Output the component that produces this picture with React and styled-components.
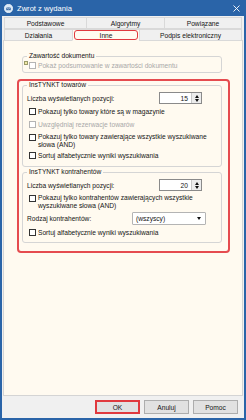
import React from 'react';
import styled, { createGlobalStyle } from 'styled-components';

const GlobalStyle = createGlobalStyle`
  html, body {
    margin: 0;
    padding: 0;
    background: #ffffff;
  }
  * {
    box-sizing: border-box;
  }
`;

const Window = styled.div`
  width: 246px;
  height: 420px;
  display: flex;
  flex-direction: column;
  background: #2a64a8;
  padding: 0 2px 2px;
  font-family: "Liberation Sans", Arial, sans-serif;
  font-size: 6.65px;
  color: #141414;
`;

const TitleBar = styled.div`
  height: 16px;
  display: flex;
  align-items: center;
  gap: 4px;
  padding: 0 4px 0 2px;
  color: #ffffff;
  font-size: 7.6px;
`;

const TitleText = styled.span`
  flex: 1;
`;

const Client = styled.div`
  flex: 1;
  display: flex;
  flex-direction: column;
  background: #f0f0f0;
  padding: 1px 1px 0;
`;

const Tabs = styled.div`
  display: flex;
  flex-direction: column;
  padding: 0 1px;
  position: relative;
  z-index: 1;
  margin-bottom: -1px;
`;

const TabRow = styled.div`
  display: flex;
  height: 12px;
`;

const Tab = styled.div`
  position: relative;
  width: ${(p) => p.w}px;
  margin-left: -1px;
  display: flex;
  align-items: center;
  justify-content: center;
  border: 1px solid #d9d9d9;
  border-bottom-color: ${(p) => (p.active ? '#fffaf0' : '#d9d9d9')};
  background: ${(p) => (p.active ? '#fffaf0' : '#f0f0f0')};
  &:first-child {
    margin-left: 0;
  }
  &::after {
    content: '';
    display: ${(p) => (p.marked ? 'block' : 'none')};
    position: absolute;
    inset: 0 1px 0 1px;
    border: 1.5px solid #e0393e;
    border-radius: 3px;
  }
`;

const Panel = styled.div`
  flex: 1;
  background: #fffaf0;
  border: 1px solid #d4d4d4;
  padding: 11px 0 0 18px;
  display: flex;
  flex-direction: column;
  align-items: flex-start;
`;

const Group = styled.fieldset`
  width: 200px;
  margin: ${(p) => p.mt || 0}px 0 0;
  padding: 0 0 ${(p) => p.pb || 0}px 4px;
  border: 1px solid #d5d5d5;
  border-radius: 3px;
  display: flex;
  flex-direction: column;
  min-width: 0;
`;

const Legend = styled.legend`
  padding: 0 2px;
  margin-left: 0;
  line-height: 8px;
  color: #141414;
`;

const Highlight = styled.div`
  margin: 6px 0 0 -5px;
  border: 2px solid #e54b4f;
  border-radius: 4px;
  padding: 0 6px 8px 3px;
`;

const Row = styled.div`
  display: flex;
  align-items: center;
  height: ${(p) => p.h || 13}px;
  margin-top: ${(p) => p.mt || 0}px;
`;

const CheckRow = styled.label`
  display: flex;
  align-items: ${(p) => (p.multi ? 'flex-start' : 'center')};
  height: ${(p) => p.h || 13}px;
  padding: ${(p) => (p.multi ? '2px' : '0')} 0 0 2px;
  color: ${(p) => (p.disabled ? '#a8a8a8' : '#141414')};
`;

const Marker = styled.span`
  width: 4px;
  height: 4px;
  margin: 0 1px 0 -5px;
  align-self: flex-start;
  margin-top: 1px;
  background: #f1e9a6;
  border: 1px solid #9a9a6a;
  flex-shrink: 0;
`;

const Box = styled.span`
  width: 7px;
  height: 7px;
  flex-shrink: 0;
  margin: ${(p) => (p.multi ? '0.5px' : '0')} 2px 0 0;
  border: 1px solid ${(p) => (p.disabled ? '#b4b4b4' : '#333333')};
  background: #ffffff;
`;

const CheckText = styled.span`
  line-height: 8px;
  width: 172px;
`;

const Spin = styled.div`
  display: flex;
  height: 12px;
  margin: 0 19px 0 auto;
  border: 1px solid #8a8a8a;
  background: #ffffff;
`;

const SpinValue = styled.span`
  width: 31px;
  display: flex;
  align-items: center;
  justify-content: flex-end;
  padding-right: 3px;
`;

const SpinButtons = styled.span`
  width: 10px;
  display: flex;
  flex-direction: column;
  align-items: center;
  justify-content: center;
  gap: 1px;
  background: #ececec;
  border-left: 1px solid #c8c8c8;
`;

const Arrow = styled.span`
  width: 0;
  height: 0;
  border-left: 2.5px solid transparent;
  border-right: 2.5px solid transparent;
  ${(p) => (p.up ? 'border-bottom' : 'border-top')}: 3px solid #111111;
`;

const Select = styled.div`
  display: flex;
  align-items: center;
  justify-content: space-between;
  width: 74px;
  height: 13px;
  margin: 0 15px 0 auto;
  padding: 0 4px 0 3px;
  border: 1px solid #b4b4b4;
  border-radius: 1px;
  background: #ffffff;
`;

const Footer = styled.div`
  height: 22px;
  display: flex;
  align-items: center;
  justify-content: flex-end;
  gap: 4px;
  padding: 0 5px 0 0;
`;

const Button = styled.div`
  width: 45px;
  height: 14px;
  display: flex;
  align-items: center;
  justify-content: center;
  background: #e1e1e1;
  border: ${(p) => (p.marked ? '2px solid #e0393e' : '1px solid #adadad')};
`;

function AppIcon() {
  return (
    <svg width="9" height="9" viewBox="0 0 9 9">
      <circle cx="4.5" cy="4.5" r="4.2" fill="#dbe9f7" stroke="#ffffff" strokeWidth="0.6" />
      <path d="M2.2 3.4h4.6v2.8H2.2z" fill="#3f6fa8" />
      <path d="M2.2 3.4l2.3 1.6 2.3-1.6" fill="none" stroke="#ffffff" strokeWidth="0.5" />
    </svg>
  );
}

function CloseIcon() {
  return (
    <svg width="7" height="7" viewBox="0 0 7 7">
      <path d="M0.5 0.5L6.5 6.5M6.5 0.5L0.5 6.5" stroke="#ffffff" strokeWidth="0.9" />
    </svg>
  );
}

function Check({ children, disabled, multi, h, marker }) {
  return (
    <CheckRow disabled={disabled} multi={multi} h={h}>
      {marker && <Marker />}
      <Box disabled={disabled} multi={multi} />
      <CheckText>{children}</CheckText>
    </CheckRow>
  );
}

function SpinBox({ value }) {
  return (
    <Spin>
      <SpinValue>{value}</SpinValue>
      <SpinButtons>
        <Arrow up />
        <Arrow />
      </SpinButtons>
    </Spin>
  );
}

export default function App() {
  return (
    <Window>
      <GlobalStyle />
      <TitleBar>
        <AppIcon />
        <TitleText>Zwrot z wydania</TitleText>
        <CloseIcon />
      </TitleBar>
      <Client>
        <Tabs>
          <TabRow>
            <Tab w={83}>Podstawowe</Tab>
            <Tab w={79}>Algorytmy</Tab>
            <Tab w={78}>Powiązane</Tab>
          </TabRow>
          <TabRow>
            <Tab w={69}>Działania</Tab>
            <Tab w={68} active marked>Inne</Tab>
            <Tab w={103}>Podpis elektroniczny</Tab>
          </TabRow>
        </Tabs>
        <Panel>
          <Group pb={1}>
            <Legend>Zawartość dokumentu</Legend>
            <Check disabled marker h={11}>Pokaż podsumowanie w zawartości dokumentu</Check>
          </Group>
          <Highlight>
            <Group pb={4}>
              <Legend>InsTYNKT towarów</Legend>
              <Row h={14} mt={2}>
                Liczba wyświetlanych pozycji:
                <SpinBox value="15" />
              </Row>
              <Check>Pokazuj tylko towary które są w magazynie</Check>
              <Check disabled>Uwzględniaj rezerwacje towarów</Check>
              <Check multi h={18}>Pokazuj tylko towary zawierające wszystkie wyszukiwane słowa (AND)</Check>
              <Check>Sortuj alfabetycznie wyniki wyszukiwania</Check>
            </Group>
            <Group mt={1} pb={3}>
              <Legend>InsTYNKT kontrahentów</Legend>
              <Row h={14} mt={2}>
                Liczba wyświetlanych pozycji:
                <SpinBox value="20" />
              </Row>
              <Check multi h={18}>Pokazuj tylko kontrahentów zawierających wszystkie wyszukiwane słowa (AND)</Check>
              <Row h={16}>
                Rodzaj kontrahentów:
                <Select>
                  <span>(wszyscy)</span>
                  <Arrow />
                </Select>
              </Row>
              <Check>Sortuj alfabetycznie wyniki wyszukiwania</Check>
            </Group>
          </Highlight>
        </Panel>
        <Footer>
          <Button marked>OK</Button>
          <Button>Anuluj</Button>
          <Button>Pomoc</Button>
        </Footer>
      </Client>
    </Window>
  );
}
